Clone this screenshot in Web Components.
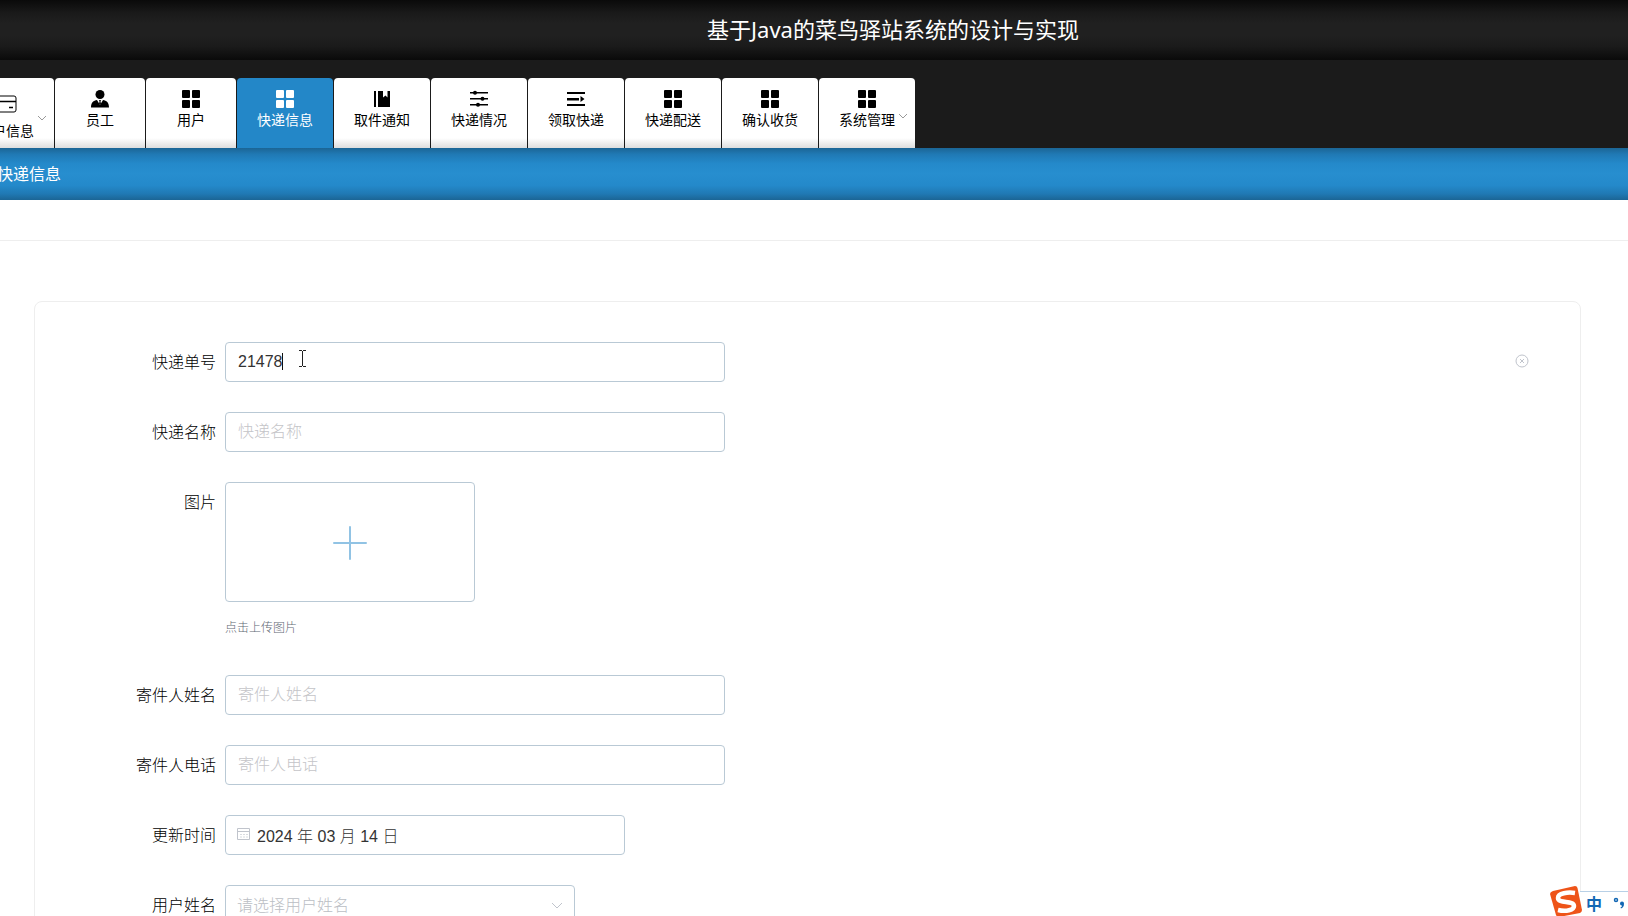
<!DOCTYPE html>
<html lang="zh-CN">
<head>
<meta charset="utf-8">
<title>基于Java的菜鸟驿站系统的设计与实现</title>
<style>
  html { scrollbar-width: none; }
  body {
    margin: 0;
    overflow-x: hidden;
    background: #fff;
    color: #333;
    font-family: "Liberation Sans", "Noto Sans CJK SC", sans-serif;
    font-size: 16px;
  }
</style>
</head>
<body>
<app-shell></app-shell>

<script>
const icons = {
  card: '<g fill="none" stroke="currentColor"><rect x="-1" y="1" width="20" height="16" rx="2"/><path d="M-1 6.500h20M12 12.500h4" stroke-width="1.500"/></g>',
  person: '<circle cx="9" cy="4.500" r="4.500"/><path d="M0 17.500c0-5 2.500-7 6-7.500l3 5 3-5c3.500.5 6 2.500 6 7.500z"/><path d="M8 10h2l-.5 1.500.5 2.500-1 1-1-1 .5-2.500z"/>',
  grid: '<rect x="0" y="0" width="8" height="8" rx="1"/><rect x="10" y="0" width="8" height="8" rx="1"/><rect x="0" y="10" width="8" height="8" rx="1"/><rect x="10" y="10" width="8" height="8" rx="1"/>',
  book: '<path d="M1 1h2v16H1zM5 1h5v6.500l2.500-2 2 2V1H17v16H5z"/>',
  sliders: '<path d="M0 2h18v1.500H0zM0 8h18v1.500H0zM0 14h18v1.500H0z"/><circle cx="5" cy="2.700" r="2"/><circle cx="12.500" cy="8.700" r="2"/><circle cx="8" cy="14.700" r="2"/>',
  list: '<path d="M0 2h18v2H0zM0 8h12v2.500H0zM0 14h18v2H0zM13.500 6l4 3-4 3z"/>'
};

function define(name, html, setup) {
  const template = document.createElement('template');
  template.innerHTML = html;
  customElements.define(name, class extends HTMLElement {
    connectedCallback() {
      if (this.shadowRoot) return;
      const root = this.attachShadow({ mode: 'open' });
      root.append(template.content.cloneNode(true));
      if (setup) setup(this, root);
    }
  });
}

define('site-header', `
  <style>
    :host {
      display: flex; align-items: center; justify-content: center;
      height: 60px; box-sizing: border-box; padding: 0 0 2px 158px;
      background: linear-gradient(#0a0a0a, #1a1a1a 22%, #202020 40%, #202020 60%, #1a1a1a 78%, #0a0a0a);
      color: #fff;
    }
    h1 { margin: 0; font: 400 22px/32px "Noto Sans", "Noto Sans CJK SC", sans-serif; white-space: nowrap; }
  </style>
  <h1><slot></slot></h1>`);

define('main-nav', `
  <style>
    :host { display: block; padding-top: 18px; background: #1b1b1b; overflow: hidden; }
    nav { display: flex; gap: 1px; margin-left: -42px; }
  </style>
  <nav aria-label="主菜单"><slot></slot></nav>`);

define('nav-tab', `
  <style>
    :host { display: block; flex: none; }
    a {
      position: relative; display: flex; flex-direction: column; align-items: center; gap: 1px;
      height: 70px; box-sizing: border-box; padding: 12px 20px 0;
      border-radius: 4px 4px 0 0;
      background: linear-gradient(#fff 60px, #ddd);
      color: #000; text-decoration: none; white-space: nowrap;
      font-size: 14px; line-height: 22px;
    }
    :host([short]) a { padding-left: 31px; padding-right: 31px; }
    :host([wide]) a { padding-top: 17px; gap: 7px; }
    :host([active]) a { background: #2387c8; color: #fff; }
    .icon { width: 18px; height: 18px; fill: currentColor; flex: none; overflow: visible; }
    .arrow { display: none; position: absolute; right: 7px; top: 34px; fill: none; stroke: #999; }
    :host([menu]) .arrow { display: block; }
    :host([wide]) .arrow { top: 36px; }
  </style>
  <a href="#"><svg class="icon" viewBox="0 0 18 18" aria-hidden="true"></svg><span><slot></slot></span>
  <svg class="arrow" width="10" height="8" viewBox="0 0 10 8" aria-hidden="true"><path d="M1 2l4 4 4-4"/></svg></a>`,
  (el, root) => {
    root.querySelector('.icon').innerHTML = icons[el.getAttribute('icon')];
    if (el.hasAttribute('active')) root.querySelector('a').setAttribute('aria-current', 'page');
  });

define('page-crumb', `
  <style>
    :host {
      display: flex; align-items: center; height: 52px; box-sizing: border-box; padding-top: 2px;
      background: linear-gradient(#1b6595, #2079b4 12%, #2489ca 30%, #278ecf 50%, #2489ca 72%, #2079b4 88%, #1b6595);
      color: #fff; overflow: hidden;
    }
    span { margin-left: -3px; line-height: 24px; }
  </style>
  <span><slot></slot></span>`);

define('form-card', `
  <style>
    :host {
      display: flex; flex-direction: column; gap: 30px;
      margin: 60px 47px 40px 34px; padding: 40px 40px 40px 60px;
      border: 1px solid #eee; border-radius: 8px;
    }
  </style>
  <slot></slot>`);

define('form-field', `
  <style>
    :host { display: flex; gap: 9px; --w: 500px; }
    label { width: 121px; flex: none; text-align: right; font-weight: 300; line-height: 42px; height: 40px; color: #000; }
    .box {
      position: relative; display: flex; align-items: center; gap: 8px;
      width: var(--w); max-width: 100%; height: 40px; box-sizing: border-box;
      padding: 0 12px; border: 1px solid #b9c9d5; border-radius: 4px; background: #fff;
    }
    input, select {
      flex: 1; min-width: 0; height: 38px; padding: 0; border: 0; outline: 0;
      background: transparent; color: #333; font: inherit; font-weight: 300; appearance: none;
    }
    input::placeholder { color: #c4c4c8; opacity: 1; }
    select { color: #bbbec4; opacity: 1; }
    svg { flex: none; fill: none; stroke: #c0c4cc; }
    .pointer { position: absolute; left: 56px; top: 7px; }
    .clear { align-self: center; margin: 0 11px 2px auto; padding: 0; border: 0; background: none; display: flex; }
    :host([kind="date"]) { --w: 400px; }
    :host([kind="date"]) .box { padding: 0 11px; gap: 7px; }
    :host([kind="date"]) svg { margin-bottom: 4px; }
    :host([kind="select"]) { --w: 350px; }
    :host([kind="select"]) .box { padding: 0 11px; }
  </style>
  <label for="control"></label>
  <div class="box"></div>`,
  (el, root) => {
    const kind = el.getAttribute('kind');
    const name = el.getAttribute('label');
    const value = el.getAttribute('value') || '';
    const box = root.querySelector('.box');
    root.querySelector('label').textContent = name;
    if (kind === 'select') {
      box.innerHTML = `<select id="control"><option>${el.getAttribute('placeholder')}</option></select>
        <svg width="12" height="12" viewBox="0 0 12 12" aria-hidden="true"><path d="M1 4l5 5 5-5"/></svg>`;
    } else if (kind === 'date') {
      box.innerHTML = `<svg width="13" height="13" viewBox="0 0 13 13" aria-hidden="true"><path d="M.5 1.500h12v11H.5zM.5 4.500h12"/><path d="M3 7.500h2M6 7.500h2M9 7.500h2M3 10h2M6 10h2M9 10h2" stroke-opacity=".6"/></svg>
        <input id="control" type="text" value="${value}">`;
    } else {
      box.innerHTML = `<input id="control" type="text" value="${value}" placeholder="${name}">`;
    }
    if (el.hasAttribute('editing')) {
      box.insertAdjacentHTML('beforeend', `<svg class="pointer" width="28" height="22" viewBox="0 0 28 22" aria-hidden="true">
        <path d="M.5 3v17" stroke="#111"/><path d="M17 .5h3M21 .5h3M20.500 1v15M17 16.500h3M21 16.500h3" stroke="#222"/></svg>`);
      root.append(document.createRange().createContextualFragment(`<button class="clear" type="button" aria-label="清空">
        <svg width="14" height="14" viewBox="0 0 14 14"><circle cx="7" cy="7" r="6"/><path d="M5 5l4 4M9 5l-4 4"/></svg></button>`));
    }
  });

define('upload-field', `
  <style>
    :host { display: flex; gap: 9px; margin-bottom: 5px; }
    label { width: 121px; flex: none; text-align: right; font-weight: 300; line-height: 42px; height: 40px; color: #000; }
    .area { display: flex; flex-direction: column; gap: 15px; }
    button {
      display: flex; align-items: center; justify-content: center;
      width: 250px; height: 120px; padding: 2px 0 0;
      border: 1px solid #b9c9d5; border-radius: 4px; background: #fff;
    }
    p { margin: 0; font-size: 12px; font-weight: 300; line-height: 22px; height: 23px; color: #5f6974; }
  </style>
  <label for="upload">图片</label>
  <div class="area">
    <button id="upload" type="button"><svg width="34" height="34" viewBox="0 0 34 34" aria-hidden="true"><path d="M17 1v32M1 17h32" stroke="#91c3e4" stroke-width="2" stroke-linecap="round"/></svg></button>
    <p>点击上传图片</p>
  </div>`);

define('ime-bar', `
  <style>
    :host { position: fixed; right: 0; bottom: 0; display: flex; align-items: flex-end; }
    .logo { display: block; margin-right: -2px; z-index: 1; }
    .tray {
      display: flex; align-items: center; gap: 11px; width: 48px; height: 25px; box-sizing: border-box;
      padding: 0 0 2px 6px; border: solid #b8d0e6; border-width: 1px 0 0; background: #fff;
      color: #1267b4; font: 700 16px/22px "Noto Sans CJK SC", sans-serif; overflow: hidden;
    }
    .tray svg { flex: none; }
  </style>
  <svg class="logo" width="32" height="30" viewBox="0 0 32 30" aria-hidden="true">
    <path d="M3 5L25 0q2 0 2.500 2L32 24q0 2-2 3L9 31q-2 0-3-2L0 8q0-2 3-3z" fill="#ee5419"/>
    <path d="M25 7C18 6 8 7 8 12c0 6 16 2 16 8 0 4-8 6-16 4" fill="none" stroke="#fff" stroke-width="4.500"/>
  </svg>
  <div class="tray"><span>中</span><svg width="14" height="14" viewBox="0 0 14 14" aria-hidden="true"><circle cx="3" cy="4" r="1.500" fill="none" stroke="#1267b4" stroke-width="1.500"/><path d="M7 7.500a2 2 0 1 1 4 0c0 3-1 4-3 5l-.5-1c1-.5 1.500-1 1.500-2-1 0-2-.5-2-2z" fill="#1267b4"/></svg></div>`);

define('app-shell', `
  <style>
    :host { display: block; }
    .strip { height: 40px; border-bottom: 1px solid #eee; }
  </style>
  <site-header>基于Java的菜鸟驿站系统的设计与实现</site-header>
  <main-nav>
    <nav-tab wide menu icon="card">客户信息</nav-tab>
    <nav-tab short icon="person">员工</nav-tab>
    <nav-tab short icon="grid">用户</nav-tab>
    <nav-tab active icon="grid">快递信息</nav-tab>
    <nav-tab icon="book">取件通知</nav-tab>
    <nav-tab icon="sliders">快递情况</nav-tab>
    <nav-tab icon="list">领取快递</nav-tab>
    <nav-tab icon="grid">快递配送</nav-tab>
    <nav-tab icon="grid">确认收货</nav-tab>
    <nav-tab menu icon="grid">系统管理</nav-tab>
  </main-nav>
  <page-crumb>快递信息</page-crumb>
  <div class="strip"></div>
  <form-card>
    <form-field label="快递单号" value="21478" editing></form-field>
    <form-field label="快递名称"></form-field>
    <upload-field></upload-field>
    <form-field label="寄件人姓名"></form-field>
    <form-field label="寄件人电话"></form-field>
    <form-field kind="date" label="更新时间" value="2024 年 03 月 14 日"></form-field>
    <form-field kind="select" label="用户姓名" placeholder="请选择用户姓名"></form-field>
  </form-card>
  <ime-bar></ime-bar>`);
</script>
</body>
</html>
